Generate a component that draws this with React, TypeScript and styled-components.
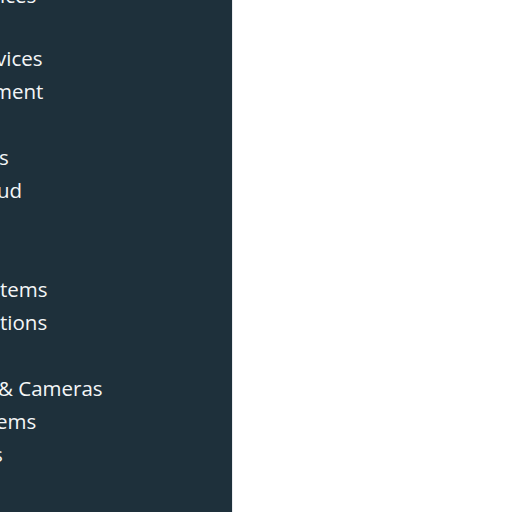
import React from "react";
import styled, { createGlobalStyle } from "styled-components";

const Global = createGlobalStyle`
  html, body { margin: 0; padding: 0; background: #ffffff; }
  body { font-family: "Open Sans", "Noto Sans", sans-serif; }
`;

const Page = styled.div`
  display: flex;
  width: 512px;
  height: 512px;
  overflow: hidden;
  background: #ffffff;
`;

const Sidebar = styled.nav`
  width: 232px;
  flex: 0 0 232px;
  height: 512px;
  background: #1e303b;
  border-right: 1px solid #e9ebee;
  overflow: hidden;
`;

const List = styled.ul`
  list-style: none;
  margin: -21px 0 0 0;
  padding: 0;
  display: flex;
  flex-direction: column;
`;

const Item = styled.li<{ $cut: number; $short?: boolean }>`
  height: ${(p) => (p.$short ? 30 : 33)}px;
  flex: 0 0 auto;
  line-height: 33px;
  font-size: 20.5px;
  color: #f4f6f7;
  white-space: nowrap;
  margin-left: ${(p) => -p.$cut}px;
`;

const Main = styled.main`
  flex: 1;
  background: #ffffff;
`;

const items: { label: string; cut: number }[] = [
  { label: "ices", cut: 0 },
  { label: "", cut: 0 },
  { label: "vices", cut: 4 },
  { label: "ment", cut: 7 },
  { label: "", cut: 0 },
  { label: "s", cut: 1 },
  { label: "ud", cut: 3 },
  { label: "", cut: 0 },
  { label: "", cut: 0 },
  { label: "tems", cut: 0 },
  { label: "tions", cut: 0 },
  { label: "", cut: 0 },
  { label: "& Cameras", cut: 2 },
  { label: "ems", cut: 4 },
  { label: "s", cut: 7 },
  { label: "", cut: 0 },
  { label: "lt", cut: 2 },
];

export default function App() {
  return (
    <>
      <Global />
      <Page>
        <Sidebar>
          <List>
            {items.map((it, i) => (
              <Item key={i} $cut={it.cut} $short={i === 0}>
                {it.label || "\u00a0"}
              </Item>
            ))}
          </List>
        </Sidebar>
        <Main />
      </Page>
    </>
  );
}
